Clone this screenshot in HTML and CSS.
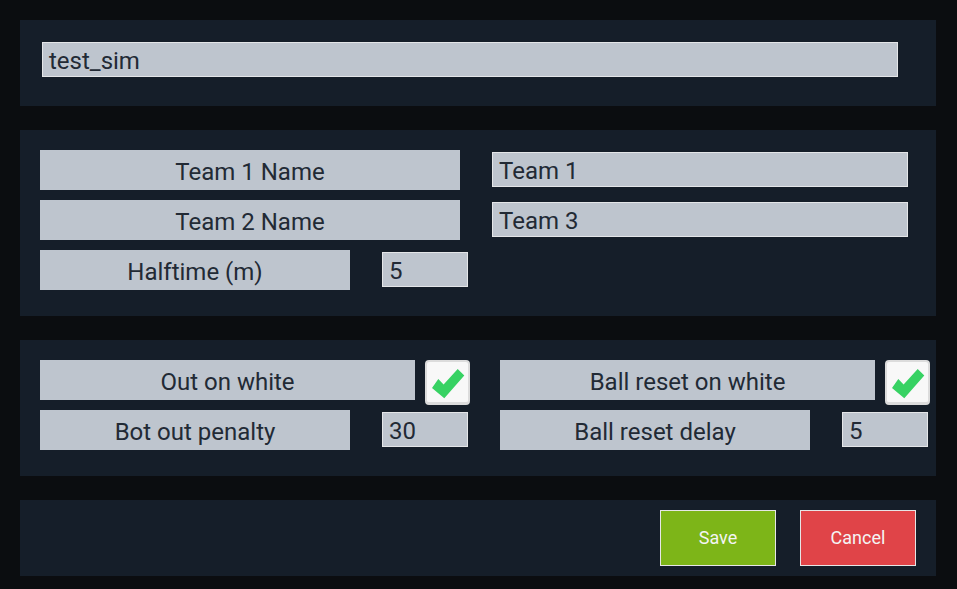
FILE: index.html
```html
<!DOCTYPE html>
<html>
<head>
<meta charset="utf-8">
<link rel="stylesheet" href="styles.css">
</head>
<body>
<div class="page">
  <section class="panel panel-name">
    <div class="field field-wide">test_sim</div>
  </section>

  <section class="panel panel-teams">
    <div class="row">
      <div class="label label-l">Team 1 Name</div>
      <div class="field field-team">Team 1</div>
    </div>
    <div class="row">
      <div class="label label-l">Team 2 Name</div>
      <div class="field field-team">Team 3</div>
    </div>
    <div class="row">
      <div class="label label-s">Halftime (m)</div>
      <div class="field field-num">5</div>
    </div>
  </section>

  <section class="panel panel-rules">
    <div class="col">
      <div class="row">
        <div class="label label-m">Out on white</div>
        <div class="check">
          <svg viewBox="0 0 45 45" width="45" height="45"><polygon points="7,28 13.3,19 18.6,24.4 32.7,9 39.3,15.6 19.3,38.3" fill="#37d263"/></svg>
        </div>
      </div>
      <div class="row">
        <div class="label label-s">Bot out penalty</div>
        <div class="field field-num">30</div>
      </div>
    </div>
    <div class="col">
      <div class="row">
        <div class="label label-m">Ball reset on white</div>
        <div class="check">
          <svg viewBox="0 0 45 45" width="45" height="45"><polygon points="7,28 13.3,19 18.6,24.4 32.7,9 39.3,15.6 19.3,38.3" fill="#37d263"/></svg>
        </div>
      </div>
      <div class="row">
        <div class="label label-s">Ball reset delay</div>
        <div class="field field-num">5</div>
      </div>
    </div>
  </section>

  <section class="panel panel-actions">
    <button class="btn btn-save">Save</button>
    <button class="btn btn-cancel">Cancel</button>
  </section>
</div>
</body>
</html>
```

FILE: styles.css
```css
* { box-sizing: border-box; }
html, body {
  margin: 0;
  padding: 0;
  background: #0b0d10;
}
body {
  font-family: Roboto, "Liberation Sans", sans-serif;
  color: #222a35;
}
.page {
  padding: 20px 21px 13px 20px;
  display: flex;
  flex-direction: column;
  gap: 24px;
}
.panel {
  background: #151e29;
}
.panel-name {
  height: 86px;
  padding: 22px 38px 0 22px;
}
.field {
  background: #bec5ce;
  border: 1px solid #e4e6e8;
  height: 35px;
  font-size: 24px;
  line-height: 36px;
  padding-left: 6px;
  white-space: nowrap;
  overflow: hidden;
}
.field-wide { width: 856px; }
.field-team { width: 416px; margin-top: 2px; }
.field-num { width: 86px; margin-top: 2px; }

.panel-teams {
  height: 186px;
  padding: 20px;
  display: flex;
  flex-direction: column;
  gap: 10px;
}
.row {
  display: flex;
  align-items: flex-start;
  height: 40px;
  gap: 32px;
}
.label {
  background: #bec5ce;
  height: 40px;
  font-size: 24px;
  line-height: 44px;
  text-align: center;
  white-space: nowrap;
  overflow: hidden;
}
.label-l { width: 420px; }
.label-m { width: 375px; }
.label-s { width: 310px; }

.panel-rules {
  height: 136px;
  padding: 20px;
  display: flex;
  gap: 30px;
}
.col {
  width: 430px;
  display: flex;
  flex-direction: column;
  gap: 10px;
}
.panel-rules .row:first-child { gap: 10px; }
.check {
  width: 45px;
  height: 45px;
  background: #f8f8f8;
  border: 2px solid #dcdcdc;
  border-bottom-width: 3px;
  border-radius: 4px;
  position: relative;
}
.check svg {
  position: absolute;
  left: -2px;
  top: -2px;
}

.panel-actions {
  height: 76px;
  padding: 10px 20px;
  display: flex;
  justify-content: flex-end;
  gap: 24px;
}
.btn {
  width: 116px;
  height: 56px;
  border: 1px solid #e6e6e6;
  font-family: Roboto, "Liberation Sans", sans-serif;
  font-size: 18px;
  color: #f4f4f4;
  padding: 0 0 1px 0;
}
.btn-save { background: #7db518; }
.btn-cancel { background: #e04448; }
```
